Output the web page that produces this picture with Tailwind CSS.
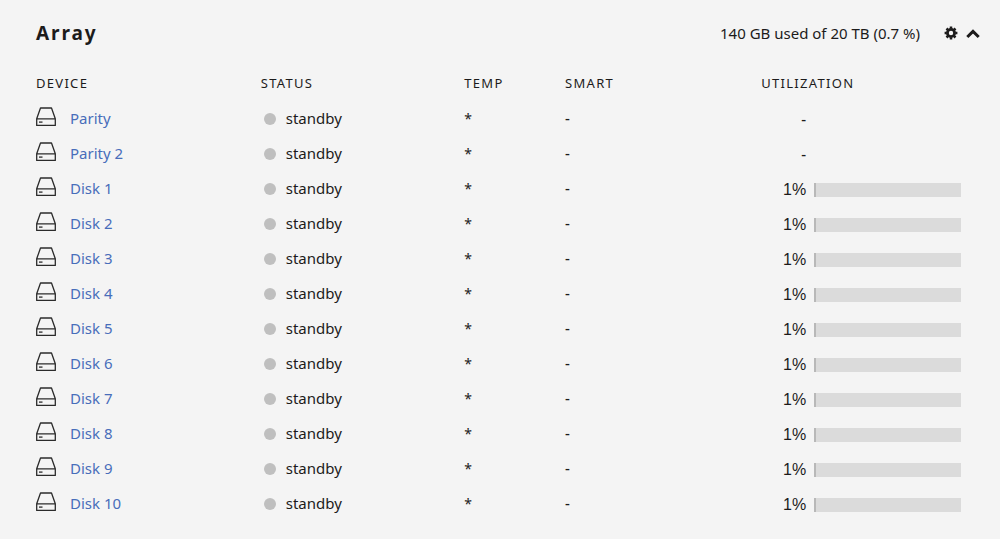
<!DOCTYPE html>
<html lang="en">
<head>
    <meta charset="UTF-8">
    <meta name="viewport" content="width=device-width, initial-scale=1.0">
    <title>Array</title>
    <script src="https://cdn.jsdelivr.net/npm/@tailwindcss/browser@4"></script>
</head>
<body class="bg-[#f4f4f4] text-[#1c1b1b] font-['Noto_Sans',sans-serif] text-[15px]">

    <main class="pt-[19px] pb-4">
        <header class="flex items-center justify-between pl-9 pr-5 h-7">
            <h1 class="text-[19px] font-bold tracking-widest">Array</h1>
            <div class="flex items-center">
                <span class="text-[15px] mr-6">140 GB used of 20 TB (0.7 %)</span>
                <button type="button" aria-label="Array settings" class="mr-2 cursor-pointer">
                    <svg class="w-[14px] h-[14px]" viewBox="0 0 14 14" fill="none" stroke="currentColor">
                        <circle cx="7" cy="7" r="3.6" stroke-width="2.8"></circle>
                        <path stroke-width="2.5" d="M7 .6v2M7 11.4v2M.6 7h2M11.4 7h2M2.5 2.5l1.4 1.4M10.1 10.1l1.4 1.4M2.5 11.5l1.4-1.4M10.1 3.9l1.4-1.4"></path>
                    </svg>
                </button>
                <button type="button" aria-label="Collapse array" class="cursor-pointer">
                    <svg class="w-[14px] h-[14px]" viewBox="0 0 14 14" fill="none" stroke="currentColor" stroke-width="3">
                        <path d="M1.3 11L7 5.4l5.7 5.6"></path>
                    </svg>
                </button>
            </div>
        </header>

        <div class="pl-9 pr-[39px] mt-[21px]">
            <table class="w-full table-fixed text-left">
                <thead>
                    <tr class="text-[13px] leading-[30px] tracking-widest">
                        <th class="w-[24.3%] pb-[3px] font-normal">DEVICE</th>
                        <th class="w-[22%] pb-[3px] font-normal">STATUS</th>
                        <th class="w-[10.9%] pb-[3px] font-normal">TEMP</th>
                        <th class="w-[21.2%] pb-[3px] font-normal">SMART</th>
                        <th class="pb-[3px] font-normal">UTILIZATION</th>
                    </tr>
                </thead>
                <tbody id="devices"></tbody>
            </table>
        </div>
    </main>

    <script>
        const devices = [
            { name: "Parity" },
            { name: "Parity 2" },
            { name: "Disk 1", used: 1 },
            { name: "Disk 2", used: 1 },
            { name: "Disk 3", used: 1 },
            { name: "Disk 4", used: 1 },
            { name: "Disk 5", used: 1 },
            { name: "Disk 6", used: 1 },
            { name: "Disk 7", used: 1 },
            { name: "Disk 8", used: 1 },
            { name: "Disk 9", used: 1 },
            { name: "Disk 10", used: 1 }
        ];

        const diskIcon = `
            <svg class="w-5 h-5 mb-1" viewBox="0 0 20 20" fill="none" stroke="#2b2b2b" stroke-width="1.3" stroke-linejoin="round">
                <path d="M4.5 1h11l3.8 10.8v6.6H.7v-6.6zM.7 11.8h18.6"></path>
                <path d="M3 15.1h3.5"></path>
            </svg>`;

        // Parity disks have no utilization, only a dash
        function utilization(device) {
            if (device.used === undefined) {
                return `<span class="block w-[45px] text-right font-medium">-</span>`;
            }
            return `
                <div class="flex items-center gap-2">
                    <span class="w-[45px] text-right text-base font-['Liberation_Sans',sans-serif]">${device.used}%</span>
                    <div class="flex-1 h-[14px] bg-[#dbdbdb]">
                        <div class="h-full bg-[#b8b8b8]" style="width: ${device.used}%"></div>
                    </div>
                </div>`;
        }

        document.getElementById("devices").innerHTML = devices.map(device => `
            <tr class="h-[35px]">
                <td>
                    <div class="flex items-center gap-[14px]">
                        ${diskIcon}
                        <a href="#" class="text-[#486dba]">${device.name}</a>
                    </div>
                </td>
                <td>
                    <div class="flex items-center gap-[10px] pl-[3px]">
                        <span class="w-3 h-3 rounded-full bg-[#bfbfbf]"></span>
                        <span>standby</span>
                    </div>
                </td>
                <td class="text-sm">*</td>
                <td class="font-medium">-</td>
                <td class="pt-[2px]">${utilization(device)}</td>
            </tr>`).join("");
    </script>
</body>
</html>
